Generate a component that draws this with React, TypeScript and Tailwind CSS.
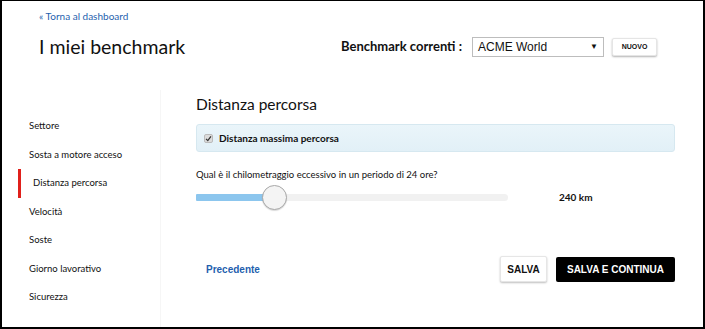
import React from "react";

const items = [
  "Settore",
  "Sosta a motore acceso",
  "Distanza percorsa",
  "Velocità",
  "Soste",
  "Giorno lavorativo",
  "Sicurezza",
];

export default function App() {
  return (
    <div
      className="w-[705px] h-[329px] bg-white border-l-2 border-r-2 border-b-2 border-t border-black flex flex-col overflow-hidden text-[#222]"
      style={{ fontFamily: "Lato, 'Noto Sans', sans-serif" }}
    >
      {/* header */}
      <div className="h-[89px] pl-[37px] pr-[46px] pt-[9px] shrink-0">
        <a className="block text-[10px] leading-[12px] text-[#1f5fae]">« Torna al dashboard</a>
        <div className="mt-[11px] flex items-center justify-between">
          <h1 className="text-[19.5px] leading-[28px] font-normal text-[#111]">I miei benchmark</h1>
          <div className="flex items-center">
            <span className="text-[13px] font-bold text-[#111]">Benchmark correnti :</span>
            <div
              className="ml-[10px] w-[132px] h-[20px] border border-[#bdbdbd] flex items-center justify-between px-[5px] text-[12px] text-[#111]"
              style={{ fontFamily: "'Liberation Sans', Arial, sans-serif" }}
            >
              <span>ACME World</span>
              <span className="text-[8px]">▼</span>
            </div>
            <button
              className="ml-[8px] w-[45px] h-[18px] bg-white rounded-[2px] shadow-[0_1px_2px_rgba(0,0,0,0.3)] border border-[#e5e5e5] text-[7px] font-bold text-[#111]"
              style={{ fontFamily: "'Liberation Sans', Arial, sans-serif" }}
            >
              NUOVO
            </button>
          </div>
        </div>
      </div>

      {/* body */}
      <div className="flex flex-1">
        <nav className="w-[159px] border-r border-[#f6f6f6] pt-[22px] shrink-0">
          {items.map((it) => {
            const active = it === "Distanza percorsa";
            return (
              <div
                key={it}
                className={
                  "ml-[16px] h-[28.5px] flex items-center text-[9.5px] text-[#111] " +
                  (active ? "border-l-[3px] border-[#e0201b] pl-[12px]" : "pl-[11px]")
                }
              >
                {it}
              </div>
            );
          })}
        </nav>

        <main className="flex-1 pl-[35px] pr-[28px] pt-[3px]">
          <h2 className="text-[15.5px] leading-[22px] font-normal text-[#111]">Distanza percorsa</h2>
          <div className="mt-[9px] h-[28px] rounded-[3px] border border-[#d6e8f0] bg-gradient-to-b from-[#eaf5fa] to-[#e2f0f7] flex items-center pl-[7px]">
            <span className="w-[9px] h-[9px] rounded-[2px] bg-[#dcdcdc] border border-[#bbb] flex items-center justify-center">
              <svg width="7" height="7" viewBox="0 0 10 10">
                <path d="M1.5 5.5 L4 8 L8.5 2" fill="none" stroke="#333" strokeWidth="1.8" />
              </svg>
            </span>
            <span className="ml-[6px] text-[10px] font-bold text-[#111]">Distanza massima percorsa</span>
          </div>

          <p className="mt-[16px] text-[9.5px] leading-[14px] text-[#111]">
            Qual è il chilometraggio eccessivo in un periodo di 24 ore?
          </p>

          <div className="mt-[2px] flex items-center h-[26px]">
            <div className="w-[312px] h-[7px] bg-[#f1f1f1] rounded-full flex items-center">
              <div className="w-[78px] h-[7px] bg-[#8cc6ee] rounded-l-[1px]" />
              <div className="w-[25px] h-[25px] -ml-[12px] rounded-full bg-[#f4f4f4] border border-[#a8a8a8] shadow-[0_1px_1px_rgba(0,0,0,0.15)] shrink-0" />
            </div>
            <span className="ml-[51px] text-[10px] font-bold text-[#111]">240 km</span>
          </div>

          <div className="mt-[46px] flex items-center justify-between">
            <a
              className="ml-[10px] text-[10px] font-bold text-[#1f5fae]"
              style={{ fontFamily: "'Liberation Sans', Arial, sans-serif" }}
            >
              Precedente
            </a>
            <div className="flex items-center" style={{ fontFamily: "'Liberation Sans', Arial, sans-serif" }}>
              <button className="w-[47px] h-[26px] bg-white rounded-[2px] border border-[#e6e6e6] shadow-[0_1px_2px_rgba(0,0,0,0.25)] text-[10px] font-bold text-[#111]">
                SALVA
              </button>
              <button className="ml-[9px] w-[119px] h-[25px] bg-black rounded-[2px] text-[10px] font-bold text-white">
                SALVA E CONTINUA
              </button>
            </div>
          </div>
        </main>
      </div>
    </div>
  );
}
